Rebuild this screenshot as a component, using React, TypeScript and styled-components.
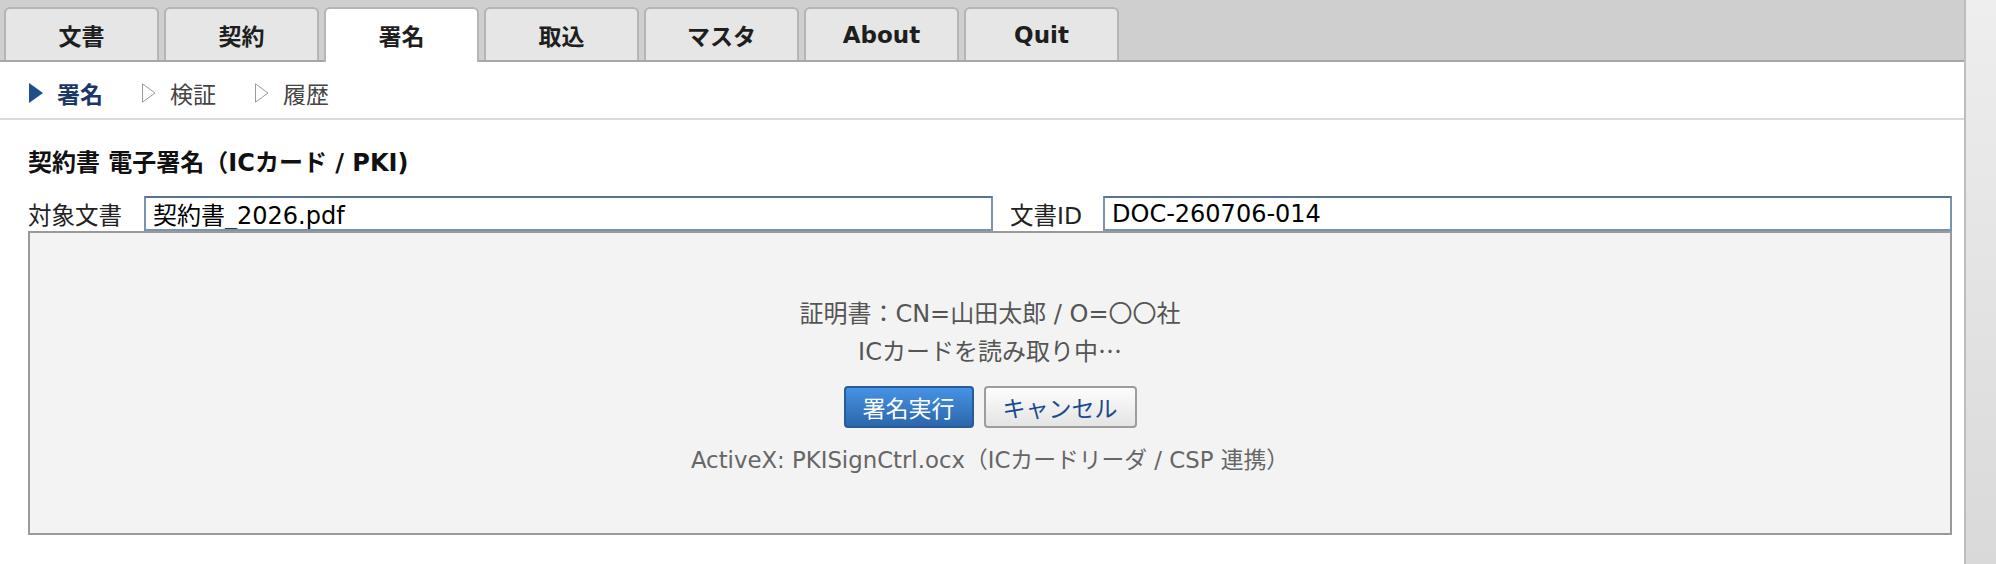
import React from "react";
import styled, { createGlobalStyle, css } from "styled-components";

const FONT = `"DejaVu Sans", "Noto Sans CJK JP", sans-serif`;

const GlobalStyle = createGlobalStyle`
  html, body { margin: 0; padding: 0; background: #fff; }
  body { font-family: ${FONT}; font-size: 23px; color: #222; }
  * { box-sizing: border-box; }
`;

const Shell = styled.div`
  display: flex;
  width: 1996px;
  height: 564px;
  overflow: hidden;
`;

const Main = styled.div`
  flex: 1;
  min-width: 0;
  display: flex;
  flex-direction: column;
`;

const ScrollTrack = styled.div`
  flex: none;
  width: 32px;
  border-left: 2px solid #bdbdbd;
  background: linear-gradient(to bottom, #eeeeee, #d9d9d9);
`;

const TabBar = styled.nav`
  display: flex;
  align-items: flex-end;
  gap: 5px;
  height: 62px;
  padding: 7px 0 0 4px;
  background: #cfcfcf;
  border-bottom: 2px solid #a7a7a7;
`;

const Tab = styled.button<{ $active?: boolean }>`
  width: 155px;
  height: 53px;
  padding: 1px 0 0;
  border: 2px solid #b5b5b5;
  border-bottom: none;
  border-radius: 6px 6px 0 0;
  background: #e6e6e6;
  font-family: ${FONT};
  font-size: 23px;
  font-weight: bold;
  color: #1e1e1e;
  cursor: pointer;
  ${(p) =>
    p.$active &&
    css`
      background: #fff;
      height: 55px;
      margin-bottom: -2px;
      padding-bottom: 2px;
    `}
`;

const SubNav = styled.div`
  display: flex;
  align-items: center;
  gap: 39px;
  height: 58px;
  padding: 5px 0 0 29px;
  border-bottom: 2px solid #d9d9d9;
`;

const SubItem = styled.a<{ $active?: boolean }>`
  display: flex;
  align-items: center;
  gap: 14px;
  font-size: 23px;
  text-decoration: none;
  cursor: pointer;
  color: ${(p) => (p.$active ? "#1b3766" : "#444")};
  font-weight: ${(p) => (p.$active ? "bold" : "normal")};
`;

const Content = styled.main`
  padding: 26px 12px 0 28px;
`;

const Title = styled.h1`
  margin: 0;
  font-size: 24px;
  font-weight: bold;
  line-height: 34px;
  color: #111;
`;

const FieldRow = styled.div`
  display: flex;
  align-items: center;
  height: 35px;
  margin-top: 16px;
`;

const Label = styled.label`
  padding: 0 21px 0 17px;
  font-size: 23.5px;
  color: #222;
  white-space: nowrap;
  &:first-child {
    padding-left: 0;
    padding-right: 22px;
  }
`;

const TextField = styled.input`
  flex: 1;
  min-width: 0;
  height: 35px;
  padding: 0 7px;
  border: 2px solid #7a93b0;
  border-top-color: #5a7190;
  background: #fff;
  font-family: ${FONT};
  font-size: 24px;
  color: #000;
  outline: none;
`;

const Panel = styled.section`
  display: flex;
  flex-direction: column;
  align-items: center;
  padding: 64px 0 55px;
  border: 2px solid #9a9a9a;
  background: #f3f3f3;
  text-align: center;
`;

const InfoLine = styled.div`
  font-size: 24px;
  line-height: 35px;
  color: #555;
`;

const Cjk = styled.span`
  font-family: "Noto Sans CJK JP", sans-serif;
`;

const ButtonRow = styled.div`
  display: flex;
  gap: 10px;
  margin-top: 16px;
`;

const ActionButton = styled.button<{ $primary?: boolean }>`
  height: 42px;
  padding: 0 17px;
  border-radius: 4px;
  font-family: ${FONT};
  font-size: 23px;
  cursor: pointer;
  ${(p) =>
    p.$primary
      ? css`
          border: 2px solid #285b98;
          background: linear-gradient(to bottom, #4692e5, #2c67ab);
          color: #fff;
        `
      : css`
          border: 2px solid #9d9d9d;
          background: linear-gradient(to bottom, #fdfdfd, #e4e4e4);
          color: #1b4a8c;
        `}
`;

const Note = styled.div`
  margin-top: 15px;
  font-size: 22.8px;
  line-height: 35px;
  color: #666;
`;

const Arrow = ({ filled }: { filled?: boolean }) => (
  <svg width="14" height="20" viewBox="0 0 14 20">
    {filled ? (
      <polygon points="0,0 14,10 0,20" fill="#1f4c8a" />
    ) : (
      <polygon points="0.5,0.8 13,10 0.5,19.2" fill="none" stroke="#9a9a9a" strokeWidth="1" />
    )}
  </svg>
);

const tabs = ["文書", "契約", "署名", "取込", "マスタ", "About", "Quit"];
const subs = ["署名", "検証", "履歴"];

export default function App() {
  return (
    <>
      <GlobalStyle />
      <Shell>
        <Main>
          <TabBar>
            {tabs.map((t) => (
              <Tab key={t} $active={t === "署名"}>
                {t}
              </Tab>
            ))}
          </TabBar>
          <SubNav>
            {subs.map((s, i) => (
              <SubItem key={s} $active={i === 0}>
                <Arrow filled={i === 0} />
                {s}
              </SubItem>
            ))}
          </SubNav>
          <Content>
            <Title>契約書 電子署名（ICカード / PKI)</Title>
            <FieldRow>
              <Label>対象文書</Label>
              <TextField defaultValue="契約書_2026.pdf" />
              <Label>文書ID</Label>
              <TextField defaultValue="DOC-260706-014" />
            </FieldRow>
            <Panel>
              <InfoLine>証明書：CN=山田太郎 / O=〇〇社</InfoLine>
              <InfoLine>
                ICカードを読み取り中<Cjk>…</Cjk>
              </InfoLine>
              <ButtonRow>
                <ActionButton $primary>署名実行</ActionButton>
                <ActionButton>キャンセル</ActionButton>
              </ButtonRow>
              <Note>ActiveX: PKISignCtrl.ocx（ICカードリーダ / CSP 連携）</Note>
            </Panel>
          </Content>
        </Main>
        <ScrollTrack />
      </Shell>
    </>
  );
}
